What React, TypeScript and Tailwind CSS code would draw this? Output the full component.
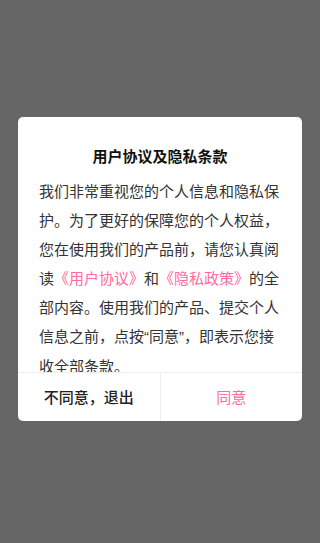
import React from "react";

const Q = ({ children }: { children: React.ReactNode }) => (
  <span style={{ fontFamily: '"Liberation Sans", sans-serif' }}>{children}</span>
);

export default function App() {
  return (
    <div
      className="w-[320px] h-[543px] bg-[#666666] pt-[117px] flex flex-col items-center"
      style={{ fontFamily: '"Noto Sans CJK SC", "Noto Sans", sans-serif' }}
    >
      <div className="w-[284px] h-[304px] bg-white rounded-[5px] flex flex-col overflow-hidden">
        <div className="pt-[28px] text-center text-[15px] leading-[22px] font-bold text-[#111]">
          用户协议及隐私条款
        </div>
        <div className="mt-[9px] flex-1 overflow-hidden pl-[21px] pr-[22px]">
          <p className="text-[15px] leading-[29px] text-[#333]">
            我们非常重视您的个人信息和隐私保护。为了更好的保障您的个人权益，您在使用我们的产品前，请您认真阅读
            <span className="text-[#ff6b9d]">《用户协议》</span>和
            <span className="text-[#ff6b9d]">《隐私政策》</span>
            的全部内容。使用我们的产品、提交个人信息之前，点按<Q>“</Q>同意<Q>”</Q>，即表示您接收全部条款。
          </p>
        </div>
        <div className="h-[49px] border-t border-[#eeeeee] flex">
          <div className="flex-1 flex items-center justify-center text-[15px] font-medium text-[#222]">
            不同意，退出
          </div>
          <div className="w-px bg-[#eeeeee]" />
          <div className="flex-1 flex items-center justify-center text-[15px] text-[#ff6b9d]">
            同意
          </div>
        </div>
      </div>
    </div>
  );
}
